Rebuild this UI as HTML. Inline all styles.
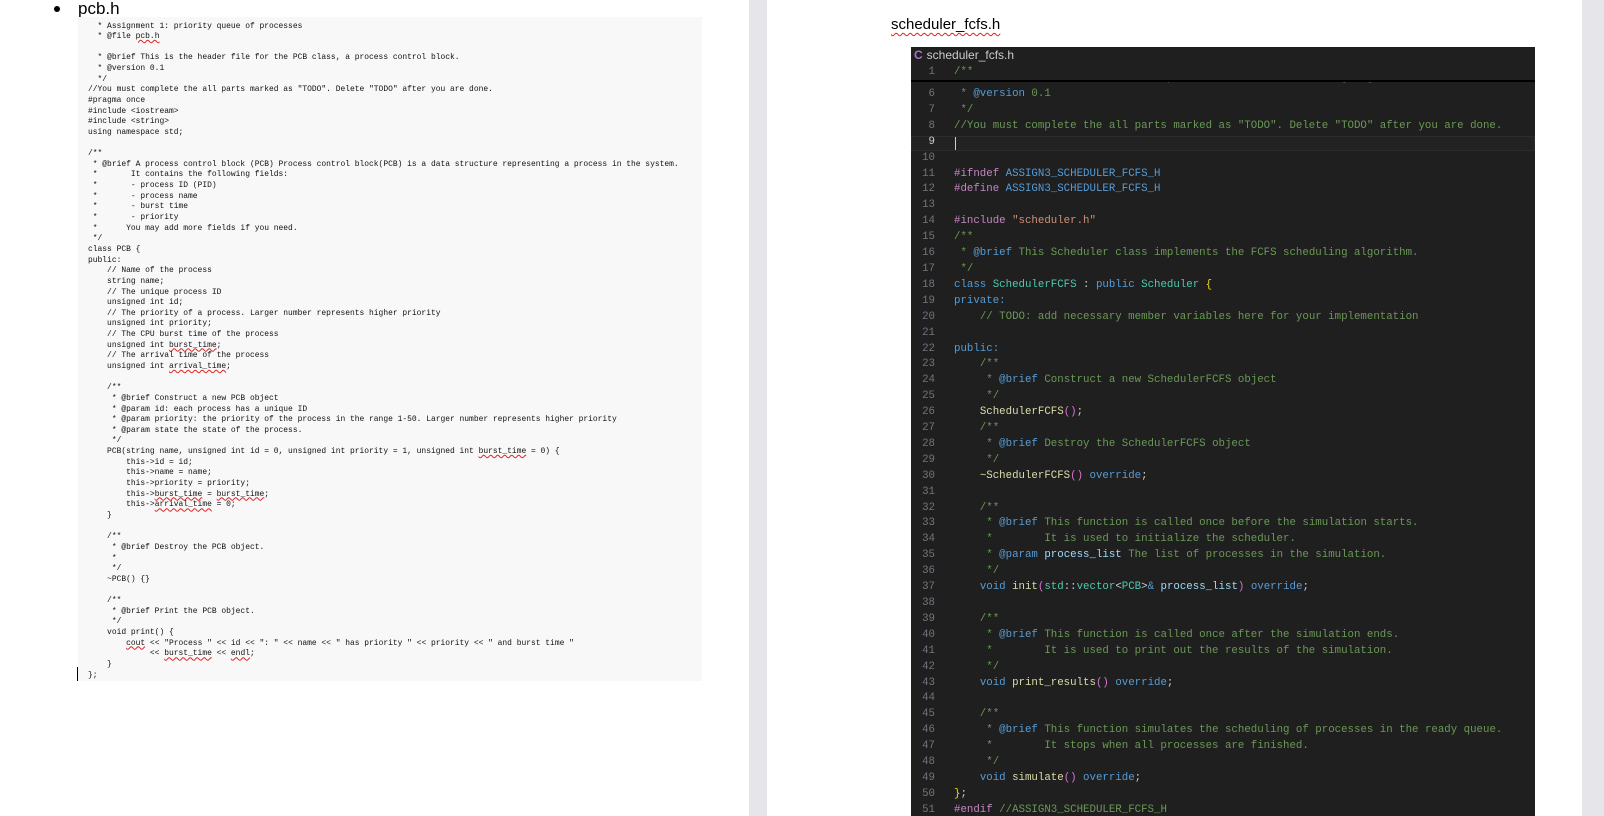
<!DOCTYPE html>
<html><head><meta charset="utf-8"><style>
html,body{margin:0;padding:0;width:1604px;height:816px;overflow:hidden;background:#fff;position:relative;font-family:"Liberation Sans",sans-serif}
.gray{position:absolute;top:0;height:816px;background:#e6e6ea}
.bul{position:absolute;left:54px;top:6px;width:6px;height:6px;border-radius:50%;background:#000}
.h{position:absolute;font-size:16px;color:#000;text-decoration:underline wavy #d22;text-decoration-thickness:1px;text-underline-offset:3px}
.lcode{position:absolute;left:78px;top:17px;width:624px;height:664px;background:#f8f8f8}
.lpre{position:absolute;left:88px;top:21.5px;margin:0;font-family:"Liberation Mono",monospace;font-size:7.95px;line-height:10.64px;color:#111;white-space:pre}
.sq{text-decoration:underline wavy #d22;text-decoration-thickness:1px}
.ed{position:absolute;left:911px;top:47px;width:624px;height:769px;background:#1f1f1f;overflow:hidden}
.tab{position:absolute;left:0;top:0;height:17px;width:624px;font-size:12px;color:#ccc;line-height:17px}
.tab b{color:#a074c4;margin:0 4px 0 3px}
.c{color:#6a9955}.k{color:#569cd6}.t{color:#4ec9b0}.p{color:#c586c0}.s{color:#ce9178}.f{color:#dcdcaa}.v{color:#9cdcfe}.y{color:#ffd700}.m{color:#da70d6}
</style></head><body>
<div class="gray" style="left:749px;width:18px"></div>
<div class="gray" style="left:1582px;width:22px"></div>
<div class="bul"></div>
<div class="h" style="left:78px;top:-1px;font-size:17px">pcb.h</div>
<div class="lcode"></div>
<pre class="lpre">  * Assignment 1: priority queue of processes
  * @file <span class="sq">pcb.h</span>

  * @brief This is the header file for the PCB class, a process control block.
  * @version 0.1
  */
//You must complete the all parts marked as "TODO". Delete "TODO" after you are done.
#pragma once
#include &lt;iostream&gt;
#include &lt;string&gt;
using namespace std;

/**
 * @brief A process control block (PCB) Process control block(PCB) is a data structure representing a process in the system.
 *       It contains the following fields:
 *       - process ID (PID)
 *       - process name
 *       - burst time
 *       - priority
 *      You may add more fields if you need.
 */
class PCB {
public:
    // Name of the process
    string name;
    // The unique process ID
    unsigned int id;
    // The priority of a process. Larger number represents higher priority
    unsigned int priority;
    // The CPU burst time of the process
    unsigned int <span class="sq">burst_time</span>;
    // The arrival time of the process
    unsigned int <span class="sq">arrival_time</span>;

    /**
     * @brief Construct a new PCB object
     * @param id: each process has a unique ID
     * @param priority: the priority of the process in the range 1-50. Larger number represents higher priority
     * @param state the state of the process.
     */
    PCB(string name, unsigned int id = 0, unsigned int priority = 1, unsigned int <span class="sq">burst_time</span> = 0) {
        this-&gt;id = id;
        this-&gt;name = name;
        this-&gt;priority = priority;
        this-&gt;<span class="sq">burst_time</span> = <span class="sq">burst_time</span>;
        this-&gt;<span class="sq">arrival_time</span> = 0;
    }

    /**
     * @brief Destroy the PCB object.
     *
     */
    ~PCB() {}

    /**
     * @brief Print the PCB object.
     */
    void print() {
        <span class="sq">cout</span> &lt;&lt; "Process " &lt;&lt; id &lt;&lt; ": " &lt;&lt; name &lt;&lt; " has priority " &lt;&lt; priority &lt;&lt; " and burst time "
             &lt;&lt; <span class="sq">burst_time</span> &lt;&lt; <span class="sq">endl</span>;
    }
};</pre>
<div style="position:absolute;left:77px;top:667px;width:1px;height:14px;background:#000"></div>
<div class="h" style="left:891px;top:16px;font-size:15px">scheduler_fcfs.h</div>
<div class="ed">
<div class="tab"><b>C</b>scheduler_fcfs.h</div>
<div style="position:absolute;left:0;top:89px;width:624px;height:15px;border:1px solid #2c2c2c;box-sizing:border-box;background:#222"></div>
<div style="position:absolute;left:44px;top:90px;width:1px;height:13px;background:#ccc"></div>
</div>
<div style="position:absolute;left:911px;top:80px;width:624px;height:736px;overflow:hidden;line-height:15.9px">
<pre style="margin:0;position:absolute;left:43px;top:-8.9px;font-family:'Liberation Mono',monospace;font-size:10.75px;line-height:15.9px;white-space:pre"><span class="c"> * </span><span class="k">@brief</span><span class="c"> This Scheduler class implements the FCFS scheduling algorithm.</span></pre>
<div style="position:absolute;left:0;top:7px">
<pre style="margin:0;position:absolute;left:0;top:0;width:24px;text-align:right;font-family:'Liberation Mono',monospace;font-size:10.75px;line-height:15.9px;color:#6e7681">6
7
8
<span style="color:#ccc">9</span>
10
11
12
13
14
15
16
17
18
19
20
21
22
23
24
25
26
27
28
29
30
31
32
33
34
35
36
37
38
39
40
41
42
43
44
45
46
47
48
49
50
51</pre>
<pre style="margin:0;position:absolute;left:43px;top:0;font-family:'Liberation Mono',monospace;font-size:10.75px;line-height:15.9px;color:#ccc;white-space:pre"><span class="c"> * </span><span class="k">@version</span><span class="c"> 0.1</span>
<span class="c"> */</span>
<span class="c">//You must complete the all parts marked as "TODO". Delete "TODO" after you are done.</span>


<span class="p">#ifndef</span> <span class="k">ASSIGN3_SCHEDULER_FCFS_H</span>
<span class="p">#define</span> <span class="k">ASSIGN3_SCHEDULER_FCFS_H</span>

<span class="p">#include</span> <span class="s">"scheduler.h"</span>
<span class="c">/**</span>
<span class="c"> * </span><span class="k">@brief</span><span class="c"> This Scheduler class implements the FCFS scheduling algorithm.</span>
<span class="c"> */</span>
<span class="k">class</span> <span class="t">SchedulerFCFS</span> : <span class="k">public</span> <span class="t">Scheduler</span> <span class="y">{</span>
<span class="k">private:</span>
    <span class="c">// TODO: add necessary member variables here for your implementation</span>

<span class="k">public:</span>
    <span class="c">/**</span>
<span class="c">     * </span><span class="k">@brief</span><span class="c"> Construct a new SchedulerFCFS object</span>
<span class="c">     */</span>
    <span class="f">SchedulerFCFS</span><span class="m">()</span>;
<span class="c">    /**</span>
<span class="c">     * </span><span class="k">@brief</span><span class="c"> Destroy the SchedulerFCFS object</span>
<span class="c">     */</span>
    <span class="f">~SchedulerFCFS</span><span class="m">()</span> <span class="k">override</span>;

<span class="c">    /**</span>
<span class="c">     * </span><span class="k">@brief</span><span class="c"> This function is called once before the simulation starts.</span>
<span class="c">     *        It is used to initialize the scheduler.</span>
<span class="c">     * </span><span class="k">@param</span> <span class="v">process_list</span><span class="c"> The list of processes in the simulation.</span>
<span class="c">     */</span>
    <span class="k">void</span> <span class="f">init</span><span class="m">(</span><span class="t">std</span>::<span class="t">vector</span>&lt;<span class="t">PCB</span>&gt;<span class="k">&amp;</span> <span class="v">process_list</span><span class="m">)</span> <span class="k">override</span>;

<span class="c">    /**</span>
<span class="c">     * </span><span class="k">@brief</span><span class="c"> This function is called once after the simulation ends.</span>
<span class="c">     *        It is used to print out the results of the simulation.</span>
<span class="c">     */</span>
    <span class="k">void</span> <span class="f">print_results</span><span class="m">()</span> <span class="k">override</span>;

<span class="c">    /**</span>
<span class="c">     * </span><span class="k">@brief</span><span class="c"> This function simulates the scheduling of processes in the ready queue.</span>
<span class="c">     *        It stops when all processes are finished.</span>
<span class="c">     */</span>
    <span class="k">void</span> <span class="f">simulate</span><span class="m">()</span> <span class="k">override</span>;
<span class="y">}</span>;
<span class="p">#endif</span> <span class="c">//ASSIGN3_SCHEDULER_FCFS_H</span></pre>
</div>
</div>
<div style="position:absolute;left:911px;top:64px;width:624px;height:16px;overflow:visible;">
<div style="position:absolute;left:0;top:0;width:624px;height:16px;background:#1f1f1f;border-bottom:2px solid #000;line-height:16px;font-family:'Liberation Mono',monospace;font-size:10.75px">
<span style="position:absolute;left:0;width:24px;text-align:right;color:#6e7681">1</span><span style="position:absolute;left:43px;color:#6a9955">/**</span>
</div>
</div>
</body></html>
